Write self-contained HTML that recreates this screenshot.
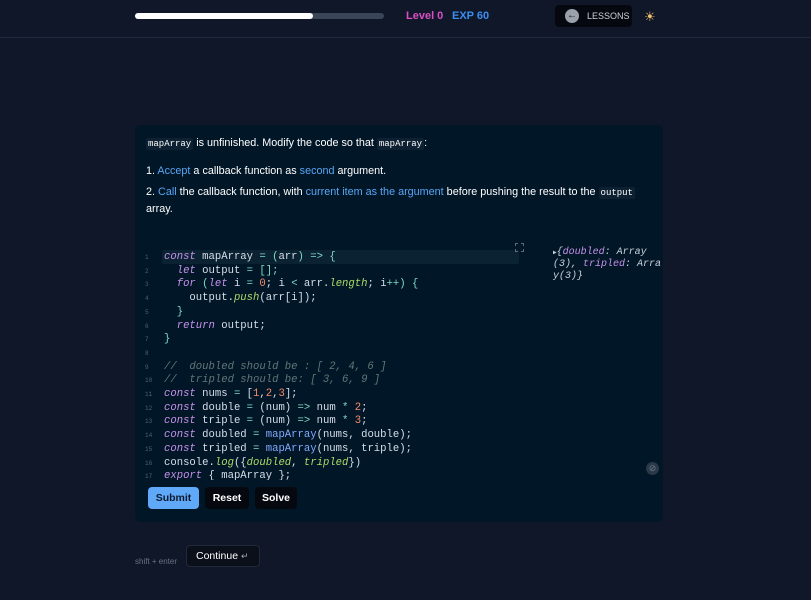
<!DOCTYPE html>
<html><head><meta charset="utf-8"><style>
*{margin:0;padding:0;box-sizing:border-box}
body{width:811px;height:600px;background:#0f1729;font-family:"Liberation Sans",sans-serif;color:#e6e9ef;position:relative;overflow:hidden}
.top{position:absolute;left:0;top:0;width:811px;height:38px;border-bottom:1px solid #1f2a3d}
.bar{position:absolute;left:135px;top:13px;width:249px;height:6px;border-radius:3px;background:#3a4557}
.bar i{position:absolute;left:0;top:0;width:178px;height:6px;border-radius:3px;background:#fff}
.lvl{position:absolute;top:10px;font-size:11px;font-weight:bold}
.les{position:absolute;left:555px;top:5px;width:77px;height:22px;background:#05080f;border-radius:4px;font-size:9px;color:#d0d4da;line-height:22px;padding-left:32px}
.les b{position:absolute;left:10px;top:4px;width:14px;height:14px;border-radius:50%;background:#9aa1ab;color:#111;font-size:10px;line-height:14px;text-align:center}
.panel{position:absolute;left:135px;top:125px;width:528px;height:397px;background:#011627;border-radius:6px}
.txt{position:absolute;left:11px;font-size:10.8px;color:#fff}
.c{font-family:"Liberation Mono",monospace;font-size:9px;background:#0d2133;padding:1px 2px;border-radius:2px}
.bl{color:#5aa6f5}
.code{position:absolute;left:0;top:126px;width:400px;height:229px;overflow:hidden;font-family:"Liberation Mono",monospace;font-size:10.6px;line-height:13.7px;color:#d6deeb}
.hl{position:absolute;left:27px;top:125px;width:357px;height:14px;background:#0b2233;border-radius:2px}
.k{color:#c792ea;font-style:italic}.f{color:#82aaff}.n{color:#f78c6c}.m{color:#7fdbca}.g{color:#637777;font-style:italic}.y{color:#addb67;font-style:italic}
.btn{position:absolute;top:362px;height:22px;border-radius:4px;font-size:10.5px;font-weight:bold;line-height:22px;text-align:center;background:#05080f;color:#fff}
</style></head><body>
<div class="top">
<div class="bar"><i></i></div>
<div class="lvl" style="left:406px;color:#d94fc4">Level 0</div>
<div class="lvl" style="left:452px;color:#3b8ef0">EXP 60</div>
<div class="les"><b>←</b>LESSONS</div>
<div style="position:absolute;left:644px;top:9px;color:#f6c36a;font-size:13px">☀</div>
</div>
<div class="panel">
<div class="txt" style="top:12px"><span class="c">mapArray</span> is unfinished. Modify the code so that <span class="c">mapArray</span>:</div>
<div class="txt" style="top:40px">1. <span class="bl">Accept</span> a callback function as <span class="bl">second</span> argument.</div>
<div class="txt" style="top:61px">2. <span class="bl">Call</span> the callback function, with <span class="bl">current item as the argument</span> before pushing the result to the <span class="c">output</span></div>
<div class="txt" style="top:78px">array.</div>
<div class="hl"></div>
<div style="position:absolute;left:380px;top:118px;width:9px;height:9px;border:1px dashed #5c6b7a"></div>
<div class="code">
<div style="position:absolute;left:10px;top:0;font-size:6px;color:#4b6479;line-height:13.7px">1<br>2<br>3<br>4<br>5<br>6<br>7<br>8<br>9<br>10<br>11<br>12<br>13<br>14<br>15<br>16<br>17</div>
<pre style="position:absolute;left:29px;top:0;font:inherit;white-space:pre"><span class="k">const</span> mapArray <span class="m">=</span> <span class="m">(</span>arr<span class="m">) =&gt; {</span>
  <span class="k">let</span> output <span class="m">=</span> <span class="m">[];</span>
  <span class="k">for</span> <span class="m">(</span><span class="k">let</span> i <span class="m">=</span> <span class="n">0</span>; i <span class="m">&lt;</span> arr.<span class="y">length</span>; i<span class="m">++) {</span>
    output.<span class="y">push</span>(arr[i]);
  <span class="m">}</span>
  <span class="k">return</span> output;
<span class="m">}</span>

<span class="g">//  doubled should be : [ 2, 4, 6 ]</span>
<span class="g">//  tripled should be: [ 3, 6, 9 ]</span>
<span class="k">const</span> nums <span class="m">=</span> [<span class="n">1</span>,<span class="n">2</span>,<span class="n">3</span>];
<span class="k">const</span> double <span class="m">=</span> (num) <span class="m">=&gt;</span> num <span class="m">*</span> <span class="n">2</span>;
<span class="k">const</span> triple <span class="m">=</span> (num) <span class="m">=&gt;</span> num <span class="m">*</span> <span class="n">3</span>;
<span class="k">const</span> doubled <span class="m">=</span> <span class="f">mapArray</span>(nums, double);
<span class="k">const</span> tripled <span class="m">=</span> <span class="f">mapArray</span>(nums, triple);
console.<span class="y">log</span>({<span class="y">doubled</span>, <span class="y">tripled</span>})
<span class="k">export</span> { mapArray };</pre>
</div>
<div style="position:absolute;left:418px;top:122px;width:110px;font-family:'Liberation Mono',monospace;font-size:10px;line-height:12px;color:#c9d2dc;font-style:italic;word-break:break-all"><span style="font-size:6px;font-style:normal">▶</span>{<span class="k">doubled</span>: Array (3), <span class="k">tripled</span>: Array(3)}</div>
<div style="position:absolute;left:511px;top:337px;width:13px;height:13px;border-radius:50%;background:#2a3848;color:#6c7a8a;font-size:9px;line-height:13px;text-align:center">⊘</div>
<div class="btn" style="left:13px;width:51px;background:#60a8f8;color:#0a1a2e">Submit</div>
<div class="btn" style="left:70px;width:44px">Reset</div>
<div class="btn" style="left:120px;width:42px">Solve</div>
</div>
<div style="position:absolute;left:135px;top:557px;font-size:8px;color:#6b7280">shift + enter</div>
<div style="position:absolute;left:186px;top:545px;width:74px;height:22px;border:1px solid #1f2937;background:#0a0f1a;border-radius:4px;font-size:10.5px;line-height:20px;padding-left:9px;color:#fff">Continue <span style="font-size:9px;color:#aaa">↵</span></div>
</body></html>
